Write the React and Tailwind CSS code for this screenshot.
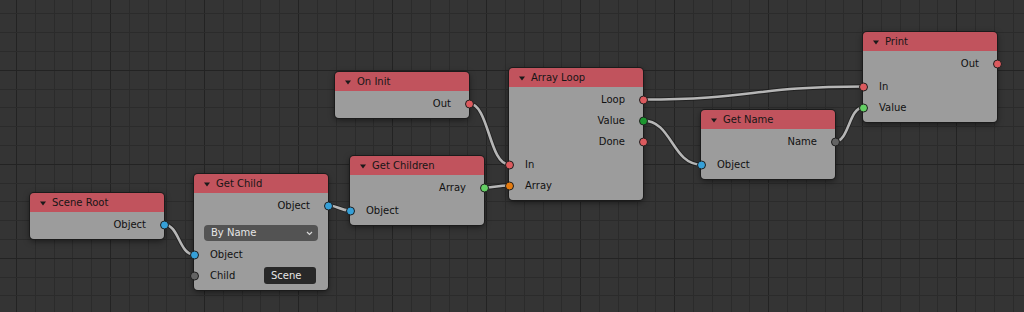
import React from "react";

const W = 134;
const HEADER = 19;
const PAD_TOP = 2;
const ROW_H = { out: 21, in: 21, gap: 2, select: 28 };

const SOCKET = {
  blue: "bg-[#36a0d8]",
  gray: "bg-[#636363]",
  red: "bg-[#dc5a5e]",
  green: "bg-[#63cf63]",
  darkgreen: "bg-[#1c962f]",
  orange: "bg-[#e57b0f]",
};

const NODES = {
  root: { title: "Scene Root", x: 30, y: 193, rows: [{ k: "out", label: "Object", c: "blue" }] },
  getChild: {
    title: "Get Child",
    x: 194,
    y: 174,
    rows: [
      { k: "out", label: "Object", c: "blue" },
      { k: "select", value: "By Name" },
      { k: "in", label: "Object", c: "blue" },
      { k: "in", label: "Child", c: "gray", field: "Scene" },
    ],
  },
  init: { title: "On Init", x: 335, y: 72, rows: [{ k: "out", label: "Out", c: "red" }] },
  children: {
    title: "Get Children",
    x: 350,
    y: 156,
    rows: [
      { k: "out", label: "Array", c: "green" },
      { k: "gap" },
      { k: "in", label: "Object", c: "blue" },
    ],
  },
  loop: {
    title: "Array Loop",
    x: 509,
    y: 68,
    rows: [
      { k: "out", label: "Loop", c: "red" },
      { k: "out", label: "Value", c: "darkgreen" },
      { k: "out", label: "Done", c: "red" },
      { k: "gap" },
      { k: "in", label: "In", c: "red" },
      { k: "in", label: "Array", c: "orange" },
    ],
  },
  name: {
    title: "Get Name",
    x: 701,
    y: 110,
    rows: [
      { k: "out", label: "Name", c: "gray" },
      { k: "gap" },
      { k: "in", label: "Object", c: "blue" },
    ],
  },
  print: {
    title: "Print",
    x: 863,
    y: 32,
    rows: [
      { k: "out", label: "Out", c: "red" },
      { k: "gap" },
      { k: "in", label: "In", c: "red" },
      { k: "in", label: "Value", c: "green" },
    ],
  },
};

const LINKS = [
  ["root", 0, "getChild", 2],
  ["getChild", 0, "children", 2],
  ["init", 0, "loop", 4],
  ["children", 0, "loop", 5],
  ["loop", 0, "print", 2],
  ["loop", 1, "name", 2],
  ["name", 0, "print", 3],
];

// socket centre in page coords
function socketPos(id, idx) {
  const n = NODES[id];
  let y = n.y + HEADER + PAD_TOP;
  for (let i = 0; i < idx; i++) y += ROW_H[n.rows[i].k];
  const row = n.rows[idx];
  return { x: n.x + (row.k === "out" ? W : 0), y: y + ROW_H[row.k] / 2 };
}

function Grid() {
  const xs = [];
  for (let i = -1; i < 56; i++) xs.push({ v: Math.round(16 + i * 18.806) + 0.5, major: ((i % 5) + 5) % 5 === 0 });
  const ys = [];
  for (let j = 0; j < 17; j++) ys.push({ v: Math.round(13.3 + j * 18.8) + 0.5, major: j % 5 === 3 });
  return (
    <g>
      {xs.map((l, i) => (
        <line key={"x" + i} x1={l.v} y1={0} x2={l.v} y2={312} stroke={l.major ? "#232323" : "#2b2b2b"} strokeWidth="1" />
      ))}
      {ys.map((l, i) => (
        <line key={"y" + i} x1={0} y1={l.v} x2={1024} y2={l.v} stroke={l.major ? "#232323" : "#2b2b2b"} strokeWidth="1" />
      ))}
    </g>
  );
}

function Wires() {
  return (
    <g fill="none" strokeLinecap="round">
      {LINKS.map(([a, ai, b, bi], i) => {
        const p = socketPos(a, ai);
        const q = socketPos(b, bi);
        const d = Math.abs(q.x - p.x) * 0.5;
        const path = `M${p.x} ${p.y} C${p.x + d} ${p.y} ${q.x - d} ${q.y} ${q.x} ${q.y}`;
        return (
          <g key={i}>
            <path d={path} stroke="rgba(20,20,20,0.55)" strokeWidth="4.4" />
            <path d={path} stroke="#b6b6b6" strokeWidth="2.6" />
          </g>
        );
      })}
    </g>
  );
}

function Socket({ side, color }) {
  return (
    <span
      className={`absolute top-1/2 -translate-y-1/2 w-[9px] h-[9px] rounded-full border border-[#1e1e1e] ${SOCKET[color]} ${
        side === "out" ? "-right-[4.5px]" : "-left-[4.5px]"
      }`}
    />
  );
}

function Row({ row }) {
  if (row.k === "gap") return <div className="h-[2px]" />;
  if (row.k === "select") {
    return (
      <div className="pt-[9px] pb-[3px] px-[10px]">
        <div className="h-4 rounded-[4px] bg-[#535353] flex items-center justify-between pl-[7px] pr-[5px] text-[#e6e6e6]">
          <span>{row.value}</span>
          <svg width="7" height="5" viewBox="0 0 7 5">
            <path d="M1 1 L3.5 3.5 L6 1" stroke="#d8d8d8" strokeWidth="1.2" fill="none" />
          </svg>
        </div>
      </div>
    );
  }
  if (row.k === "out") {
    return (
      <div className="relative h-[21px] flex items-center justify-end pr-[18px]">
        <span>{row.label}</span>
        <Socket side="out" color={row.c} />
      </div>
    );
  }
  return (
    <div className="relative h-[21px] flex items-center pl-[16px] pr-[12px]">
      <span>{row.label}</span>
      {row.field && (
        <div className="ml-auto w-[52px] h-[17px] rounded-[3px] bg-[#282828] flex items-center pl-[7px] text-[#e6e6e6]">
          {row.field}
        </div>
      )}
      <Socket side="in" color={row.c} />
    </div>
  );
}

function Node({ node }) {
  return (
    <div
      className="absolute w-[134px] rounded-[4px] shadow-[0_0_0_1px_#1b1b1b,0_2px_6px_rgba(0,0,0,0.55)]"
      style={{ left: node.x, top: node.y }}
    >
      <div className="h-[19px] rounded-t-[4px] bg-[#c1535d] flex items-center pl-[10px] text-[#161616]">
        <svg width="6" height="5" viewBox="0 0 6 5" className="mr-[6px] mt-[1px]">
          <path d="M0 0.5 L6 0.5 L3 4.5 Z" fill="#1a1a1a" />
        </svg>
        <span>{node.title}</span>
      </div>
      <div className="rounded-b-[4px] bg-[#9c9c9c] pt-[2px] pb-[4px] text-[#111]">
        {node.rows.map((r, i) => (
          <Row key={i} row={r} />
        ))}
      </div>
    </div>
  );
}

export default function App() {
  return (
    <div className="relative w-[1024px] h-[312px] overflow-hidden bg-[#343434] font-['DejaVu_Sans',sans-serif] text-[10px] leading-none">
      <svg className="absolute inset-0" width="1024" height="312">
        <Grid />
        <Wires />
      </svg>
      {Object.entries(NODES).map(([id, n]) => (
        <Node key={id} node={n} />
      ))}
    </div>
  );
}
